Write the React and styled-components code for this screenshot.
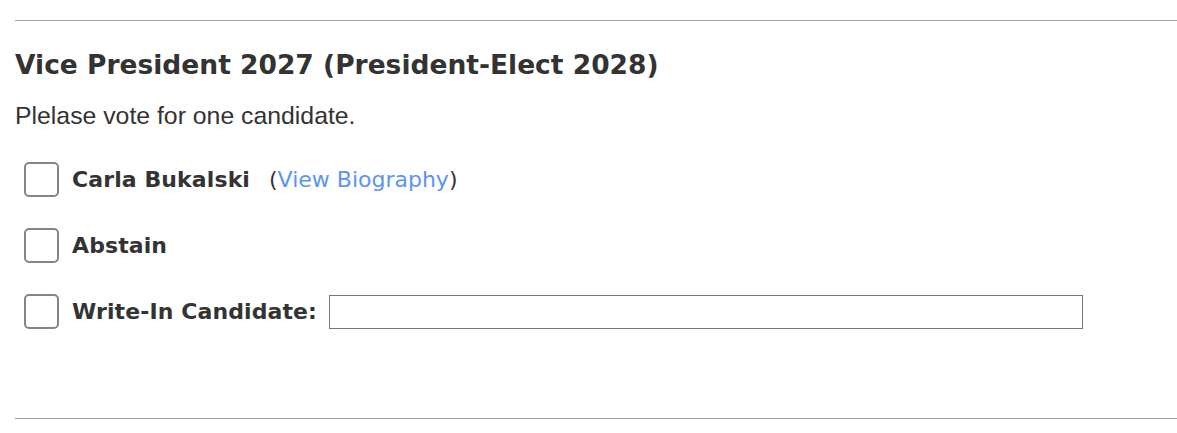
import React from "react"
import styled, { createGlobalStyle } from "styled-components"

const GlobalStyle = createGlobalStyle`
  html, body {
    margin: 0;
    padding: 0;
    background: #fff;
  }
`

const Section = styled.section`
  margin: 20px 0 0 15px;
  border-top: 1px solid #a0a0a0;
  border-bottom: 1px solid #a0a0a0;
  padding: 28px 0 89px;
  color: #333;
`

const Title = styled.h2`
  margin: 0;
  font-family: "DejaVu Sans", Verdana, sans-serif;
  font-weight: bold;
  font-size: 26.5px;
  line-height: 32px;
`

const Hint = styled.p`
  margin: 20px 0 0;
  font-family: "Liberation Sans", Arial, sans-serif;
  font-size: 24.8px;
  line-height: 30px;
`

const Choices = styled.div`
  display: flex;
  flex-direction: column;
  gap: 31px;
  margin-top: 31px;
  padding-left: 9px;
`

const Choice = styled.label`
  display: flex;
  align-items: center;
  gap: 13px;
  font-family: "DejaVu Sans", Verdana, sans-serif;
  font-size: 22px;
  line-height: 35px;
`

const Box = styled.input.attrs({ type: "checkbox" })`
  appearance: none;
  flex: none;
  margin: 0;
  width: 35px;
  height: 35px;
  box-sizing: border-box;
  border: 2px solid #858585;
  border-radius: 5px;
  background: #fff;
`

const Text = styled.span`
  display: flex;
  align-items: center;
  gap: 9px;
`

const Name = styled.span`
  font-weight: bold;
  letter-spacing: 0.1px;
`

const Bio = styled.span`
  margin-left: 10px;
  font-weight: normal;

  a {
    color: #5b95f0;
    text-decoration: none;
  }
`

const WriteIn = styled.input.attrs({ type: "text" })`
  width: 754px;
  height: 34px;
  box-sizing: border-box;
  margin-left: 3px;
  border: 1px solid #777;
  border-radius: 0;
  padding: 0 6px;
  font: inherit;
`

export default function App() {
  return (
    <>
      <GlobalStyle />
      <Section>
        <Title>Vice President 2027 (President-Elect 2028)</Title>
        <Hint>Plelase vote for one candidate.</Hint>
        <Choices>
          <Choice>
            <Box />
            <Text>
              <Name>Carla Bukalski</Name>
              <Bio>
                (<a href="#bio">View Biography</a>)
              </Bio>
            </Text>
          </Choice>
          <Choice>
            <Box />
            <Text>
              <Name>Abstain</Name>
            </Text>
          </Choice>
          <Choice>
            <Box />
            <Text>
              <Name>Write-In Candidate:</Name>
              <WriteIn />
            </Text>
          </Choice>
        </Choices>
      </Section>
    </>
  )
}
